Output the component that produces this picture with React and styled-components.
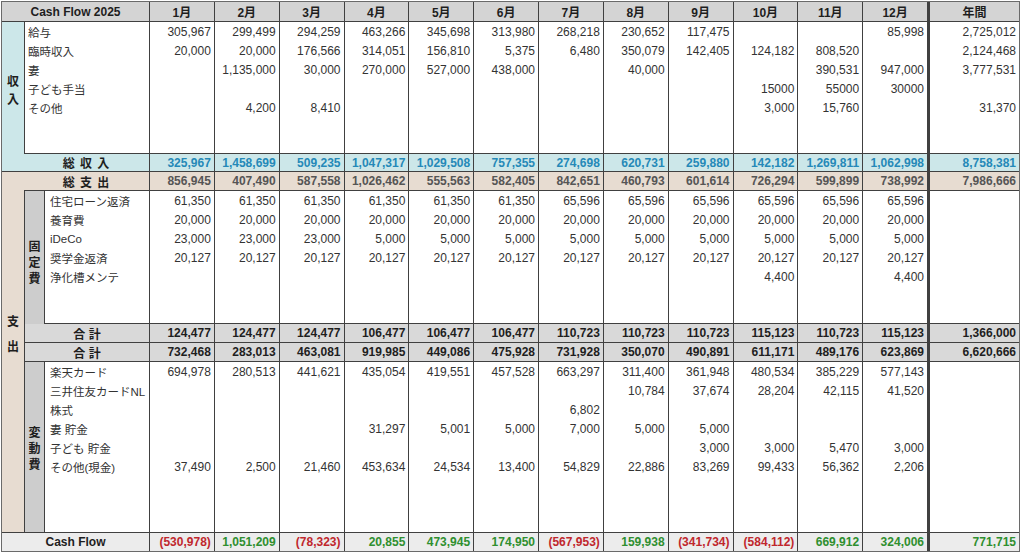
import React from 'react';
import styled, { createGlobalStyle, css } from 'styled-components';

const LINE = '#404040';
const TEAL = '#cce7e9';
const BEIGE = '#e7dcd1';
const HEAD = '#d4d4d4';
const SUB = '#d9d9d9';
const GROUP = '#cdcdcd';
const FLOW = '#ececec';
const RED = '#c0272d';
const GREEN = '#2f8f2f';

const GlobalStyle = createGlobalStyle`
  html, body { margin: 0; padding: 0; background: #ffffff; }
  body {
    font-family: "Liberation Sans", "Noto Sans CJK JP", Arial, sans-serif;
    color: #333;
  }
`;

const tones = {
  plain: { bg: '#ffffff', color: '#333333', weight: 400 },
  income: { bg: TEAL, color: '#2589b8', weight: 700 },
  expense: { bg: BEIGE, color: '#555555', weight: 700 },
  subtotal: { bg: SUB, color: '#1e1e1e', weight: 700 },
  flow: { bg: FLOW, color: '#1e1e1e', weight: 700 },
};

const Page = styled.div`
  padding: 1px 0 0 1px;
`;

const Sheet = styled.div`
  display: grid;
  box-sizing: border-box;
  width: 1019px;
  border: 1px solid #6a6a6a;
  grid-template-columns: 22px 21px 105px repeat(12, minmax(0, 1fr)) 91px;
  grid-template-rows:
    20px repeat(5, 19px) 37px 18px
    19px repeat(5, 19px) 38px 19px
    19px repeat(6, 19px) 56px 19px;
  font-size: 12px;
`;

const lineRules = css`
  ${(p) => p.$bottom && css`border-bottom: 1px solid ${LINE};`}
  ${(p) => p.$top && css`border-top: 1px solid ${LINE};`}
`;

const HeaderCell = styled.div`
  box-sizing: border-box;
  grid-column: span ${(p) => p.$span || 1};
  display: flex;
  align-items: center;
  justify-content: center;
  background: ${HEAD};
  color: #1e1e1e;
  font-weight: 700;
  font-size: 12px;
  white-space: nowrap;
  border-bottom: 1px solid ${LINE};
  ${(p) =>
    p.$annual
      ? css`border-left: 2px solid ${LINE};`
      : css`border-right: 1px solid ${LINE};`}
`;

const SectionCell = styled.div`
  box-sizing: border-box;
  grid-row: span ${(p) => p.$rows};
  display: flex;
  flex-direction: column;
  align-items: center;
  justify-content: center;
  background: ${(p) => (p.$tone === 'income' ? TEAL : BEIGE)};
  color: #1e1e1e;
  font-weight: 700;
  font-size: 12px;
  line-height: ${(p) => p.$gap}px;
  padding-bottom: ${(p) => p.$lift}px;
  ${lineRules}
`;

const GroupCell = styled.div`
  box-sizing: border-box;
  grid-row: span ${(p) => p.$rows};
  display: flex;
  flex-direction: column;
  align-items: center;
  justify-content: center;
  background: ${GROUP};
  color: #1e1e1e;
  font-weight: 700;
  font-size: 12px;
  line-height: 16px;
  padding-top: ${(p) => p.$shift}px;
  border-left: 1px solid ${LINE};
  border-right: 1px solid ${LINE};
`;

const ItemLabel = styled.div`
  box-sizing: border-box;
  grid-column: span ${(p) => p.$span || 1};
  display: flex;
  align-items: center;
  padding-left: ${(p) => (p.$boxLeft ? 3 : 5)}px;
  background: #ffffff;
  color: #333;
  font-size: 11.5px;
  white-space: nowrap;
  overflow: hidden;
  border-right: 1px solid ${LINE};
  ${(p) => p.$boxLeft && css`border-left: 1px solid ${LINE};`}
  ${lineRules}
`;

const TotalLabel = styled.div`
  box-sizing: border-box;
  grid-column: span ${(p) => p.$span || 2};
  display: flex;
  align-items: center;
  justify-content: center;
  background: ${(p) => tones[p.$tone].bg};
  color: #1e1e1e;
  font-weight: 700;
  font-size: 12px;
  letter-spacing: ${(p) => (p.$wide ? '1px' : '0')};
  white-space: pre;
  border-right: 1px solid ${LINE};
  ${(p) => p.$boxLeft && css`border-left: 1px solid ${LINE};`}
  ${lineRules}
`;

const Value = styled.div`
  box-sizing: border-box;
  display: flex;
  align-items: center;
  justify-content: flex-end;
  padding-right: 3px;
  min-width: 0;
  overflow: hidden;
  white-space: nowrap;
  font-family: "Liberation Sans", Arial, sans-serif;
  font-size: 12px;
  background: ${(p) => tones[p.$tone].bg};
  font-weight: ${(p) => tones[p.$tone].weight};
  color: ${(p) =>
    p.$sign === 'neg' ? RED : p.$sign === 'pos' ? GREEN : tones[p.$tone].color};
  ${(p) =>
    p.$annual
      ? css`border-left: 2px solid ${LINE};`
      : css`border-right: 1px solid ${LINE};`}
  ${lineRules}
`;

const months = ['1月', '2月', '3月', '4月', '5月', '6月', '7月', '8月', '9月', '10月', '11月', '12月'];
const empty12 = Array(12).fill('');

const incomeRows = [
  ['給与', ['305,967', '299,499', '294,259', '463,266', '345,698', '313,980', '268,218', '230,652', '117,475', '', '', '85,998'], '2,725,012'],
  ['臨時収入', ['20,000', '20,000', '176,566', '314,051', '156,810', '5,375', '6,480', '350,079', '142,405', '124,182', '808,520', ''], '2,124,468'],
  ['妻', ['', '1,135,000', '30,000', '270,000', '527,000', '438,000', '', '40,000', '', '', '390,531', '947,000'], '3,777,531'],
  ['子ども手当', ['', '', '', '', '', '', '', '', '', '15000', '55000', '30000'], ''],
  ['その他', ['', '4,200', '8,410', '', '', '', '', '', '', '3,000', '15,760', ''], '31,370'],
];

const totalIncome = [['325,967', '1,458,699', '509,235', '1,047,317', '1,029,508', '757,355', '274,698', '620,731', '259,880', '142,182', '1,269,811', '1,062,998'], '8,758,381'];
const totalExpense = [['856,945', '407,490', '587,558', '1,026,462', '555,563', '582,405', '842,651', '460,793', '601,614', '726,294', '599,899', '738,992'], '7,986,666'];

const fixedRows = [
  ['住宅ローン返済', ['61,350', '61,350', '61,350', '61,350', '61,350', '61,350', '65,596', '65,596', '65,596', '65,596', '65,596', '65,596'], ''],
  ['養育費', Array(12).fill('20,000'), ''],
  ['iDeCo', ['23,000', '23,000', '23,000', '5,000', '5,000', '5,000', '5,000', '5,000', '5,000', '5,000', '5,000', '5,000'], ''],
  ['奨学金返済', Array(12).fill('20,127'), ''],
  ['浄化槽メンテ', ['', '', '', '', '', '', '', '', '', '4,400', '', '4,400'], ''],
];
const fixedTotal = [['124,477', '124,477', '124,477', '106,477', '106,477', '106,477', '110,723', '110,723', '110,723', '115,123', '110,723', '115,123'], '1,366,000'];

const varTotal = [['732,468', '283,013', '463,081', '919,985', '449,086', '475,928', '731,928', '350,070', '490,891', '611,171', '489,176', '623,869'], '6,620,666'];
const varRows = [
  ['楽天カード', ['694,978', '280,513', '441,621', '435,054', '419,551', '457,528', '663,297', '311,400', '361,948', '480,534', '385,229', '577,143'], ''],
  ['三井住友カードNL', ['', '', '', '', '', '', '', '10,784', '37,674', '28,204', '42,115', '41,520'], ''],
  ['株式', ['', '', '', '', '', '', '6,802', '', '', '', '', ''], ''],
  ['妻 貯金', ['', '', '', '31,297', '5,001', '5,000', '7,000', '5,000', '5,000', '', '', ''], ''],
  ['子ども 貯金', ['', '', '', '', '', '', '', '', '3,000', '3,000', '5,470', '3,000'], ''],
  ['その他(現金)', ['37,490', '2,500', '21,460', '453,634', '24,534', '13,400', '54,829', '22,886', '83,269', '99,433', '56,362', '2,206'], ''],
];

const cashFlow = [['(530,978)', '1,051,209', '(78,323)', '20,855', '473,945', '174,950', '(567,953)', '159,938', '(341,734)', '(584,112)', '669,912', '324,006'], '771,715'];

const signOf = (v) => (v ? (v.startsWith('(') ? 'neg' : 'pos') : undefined);

function Values({ values, annual, tone = 'plain', bottom, top, signed }) {
  return (
    <>
      {values.map((v, i) => (
        <Value key={i} $tone={tone} $bottom={bottom} $top={top} $sign={signed ? signOf(v) : undefined}>
          {v}
        </Value>
      ))}
      <Value $annual $tone={tone} $bottom={bottom} $top={top} $sign={signed ? signOf(annual) : undefined}>
        {annual}
      </Value>
    </>
  );
}

function Stack({ text }) {
  return (
    <>
      {text.split('').map((c, i) => (
        <span key={i}>{c}</span>
      ))}
    </>
  );
}

export default function App() {
  return (
    <Page>
      <GlobalStyle />
      <Sheet>
        <HeaderCell $span={3}>Cash Flow 2025</HeaderCell>
        {months.map((m) => (
          <HeaderCell key={m}>{m}</HeaderCell>
        ))}
        <HeaderCell $annual>年間</HeaderCell>

        <SectionCell $rows={7} $tone="income" $gap={18} $lift={12} $bottom>
          <Stack text="収入" />
        </SectionCell>
        {incomeRows.map(([label, vals, annual]) => (
          <React.Fragment key={label}>
            <ItemLabel $span={2} $boxLeft>{label}</ItemLabel>
            <Values values={vals} annual={annual} />
          </React.Fragment>
        ))}
        <ItemLabel $span={2} $boxLeft $bottom />
        <Values values={empty12} annual="" bottom />
        <TotalLabel $tone="income" $wide $bottom>{'総 収 入'}</TotalLabel>
        <Values values={totalIncome[0]} annual={totalIncome[1]} tone="income" bottom />

        <SectionCell $rows={16} $tone="expense" $gap={25} $lift={34}>
          <Stack text="支出" />
        </SectionCell>
        <TotalLabel $tone="expense" $wide $bottom>{'総 支 出'}</TotalLabel>
        <Values values={totalExpense[0]} annual={totalExpense[1]} tone="expense" bottom />

        <GroupCell $rows={6} $shift={11}>
          <Stack text="固定費" />
        </GroupCell>
        {fixedRows.map(([label, vals, annual]) => (
          <React.Fragment key={label}>
            <ItemLabel>{label}</ItemLabel>
            <Values values={vals} annual={annual} />
          </React.Fragment>
        ))}
        <ItemLabel $bottom />
        <Values values={empty12} annual="" bottom />
        <TotalLabel $tone="subtotal" $boxLeft $bottom>{'合 計'}</TotalLabel>
        <Values values={fixedTotal[0]} annual={fixedTotal[1]} tone="subtotal" bottom />

        <TotalLabel $tone="subtotal" $boxLeft $bottom>{'合 計'}</TotalLabel>
        <Values values={varTotal[0]} annual={varTotal[1]} tone="subtotal" bottom />
        <GroupCell $rows={7} $shift={4}>
          <Stack text="変動費" />
        </GroupCell>
        {varRows.map(([label, vals, annual]) => (
          <React.Fragment key={label}>
            <ItemLabel>{label}</ItemLabel>
            <Values values={vals} annual={annual} />
          </React.Fragment>
        ))}
        <ItemLabel />
        <Values values={empty12} annual="" />

        <TotalLabel $span={3} $tone="flow" $top>Cash Flow</TotalLabel>
        <Values values={cashFlow[0]} annual={cashFlow[1]} tone="flow" top signed />
      </Sheet>
    </Page>
  );
}
